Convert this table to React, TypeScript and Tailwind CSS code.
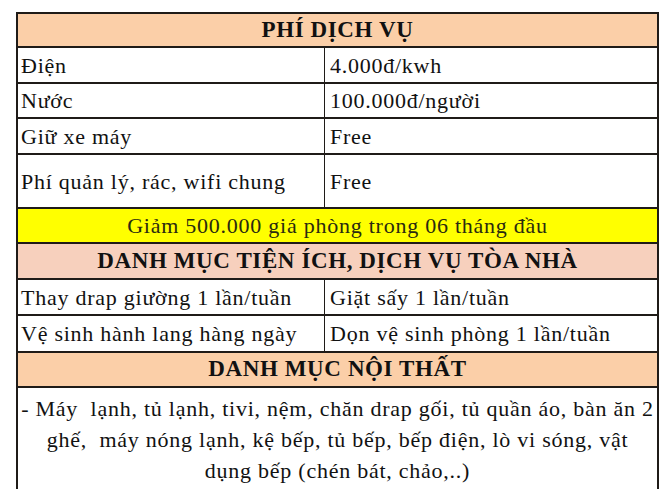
import React from 'react';

const font = { fontFamily: '"Liberation Serif", "Times New Roman", serif' };

const Header = ({ text, bg, h }: { text: string; bg: string; h: string }) => (
  <div className={`${bg} ${h} flex items-center justify-center border-b-2 border-[#1f1b18] font-bold text-[23px] tracking-[0.6px] text-[#111]`}>
    {text}
  </div>
);

const Row = ({ left, right, h }: { left: string; right: string; h: string }) => (
  <div className={`flex ${h} border-b-2 border-[#1f1b18] text-[22px] tracking-[0.75px] text-[#111]`}>
    <div className="w-[307px] flex items-center pl-[3px] border-r border-[#1f1b18]">{left}</div>
    <div className="flex-1 flex items-center pl-[5px]">{right}</div>
  </div>
);

export default function App() {
  return (
    <div className="w-[672px] h-[489px] overflow-hidden bg-white pt-[12px] pl-[16px]" style={font}>
      <div className="w-[643px] border-2 border-b-0 border-[#1f1b18]">
        <Header text="PHÍ DỊCH VỤ" bg="bg-[#fbcfa8]" h="h-[34px]" />
        <Row left="Điện" right="4.000đ/kwh" h="h-[36px]" />
        <Row left="Nước" right="100.000đ/người" h="h-[35px]" />
        <Row left="Giữ xe máy" right="Free" h="h-[36px]" />
        <Row left="Phí quản lý, rác, wifi chung" right="Free" h="h-[54px]" />
        <div className="h-[35px] bg-[#ffff00] flex items-center justify-center border-b-2 border-[#1f1b18] text-[22px] tracking-[0.75px] text-[#2a2a10]">
          Giảm 500.000 giá phòng trong 06 tháng đầu
        </div>
        <Header text="DANH MỤC TIỆN ÍCH, DỊCH VỤ TÒA NHÀ" bg="bg-[#f7d0bd]" h="h-[36px]" />
        <Row left="Thay drap giường 1 lần/tuần" right="Giặt sấy 1 lần/tuần" h="h-[36px]" />
        <Row left="Vệ sinh hành lang hàng ngày" right="Dọn vệ sinh phòng 1 lần/tuần" h="h-[37px]" />
        <Header text="DANH MỤC NỘI THẤT" bg="bg-[#fbcfa8]" h="h-[35px]" />
        <div className="h-[120px] pt-[5px] text-center text-[22px] tracking-[0.75px] leading-[31px] text-[#111] whitespace-pre">
          <div>- Máy  lạnh, tủ lạnh, tivi, nệm, chăn drap gối, tủ quần áo, bàn ăn 2</div>
          <div>ghế,  máy nóng lạnh, kệ bếp, tủ bếp, bếp điện, lò vi sóng, vật</div>
          <div>dụng bếp (chén bát, chảo,..)</div>
        </div>
      </div>
    </div>
  );
}
